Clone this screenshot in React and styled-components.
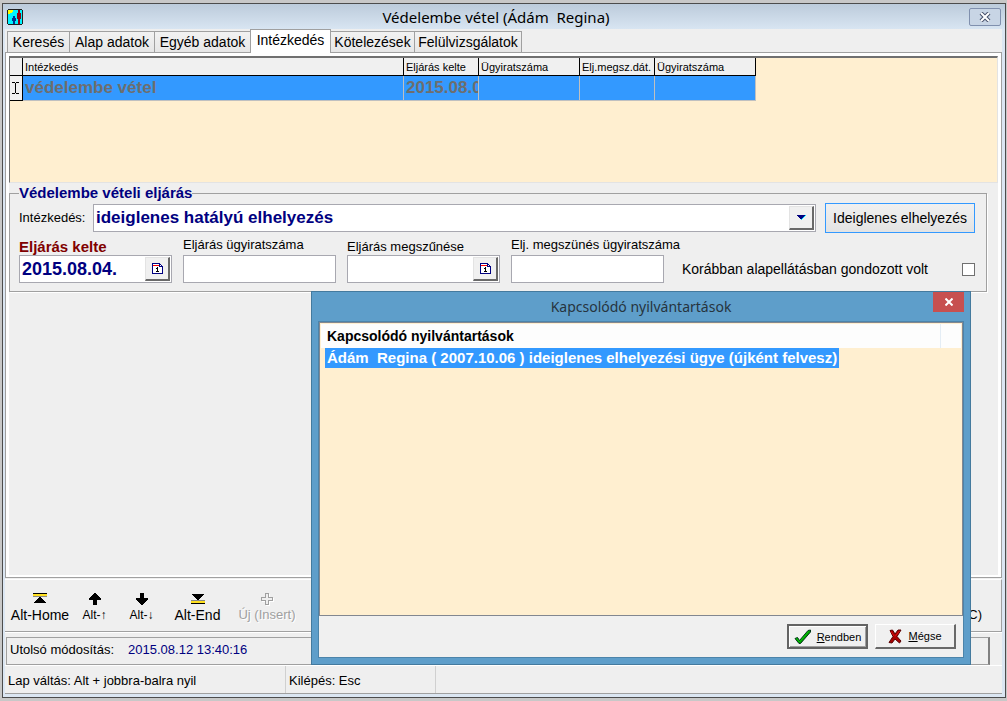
import { useState } from "react";
import styled, { createGlobalStyle, css } from "styled-components";

const tabs = [
  { title: "Keresés", width: 63 },
  { title: "Alap adatok", width: 86 },
  { title: "Egyéb adatok", width: 97 },
  { title: "Intézkedés", width: 81 },
  { title: "Kötelezések", width: 85 },
  { title: "Felülvizsgálatok", width: 108 },
];

const columns = [
  { title: "Intézkedés", width: 381, value: "védelembe vétel" },
  { title: "Eljárás kelte", width: 75, value: "2015.08.04." },
  { title: "Ügyiratszáma", width: 101, value: "" },
  { title: "Elj.megsz.dát.", width: 75, value: "" },
  { title: "Ügyiratszáma", width: 101, value: "" },
];

function FirstIcon() {
  return (
    <svg width="14" height="12" viewBox="0 0 14 12" shapeRendering="crispEdges">
      <path d="M0 0h14v1H0z" fill="#000" />
      <path d="M0 1h14v2H0z" fill="#ffe020" />
      <path d="M0 3h14v1H0z" fill="#888" />
      <path d="M6 4h2v1h1v1h1v1h1v1h1v1h1v1H1V9h1V8h1V7h1V6h1V5h1z" fill="#000" />
    </svg>
  );
}

function LastIcon() {
  return (
    <svg width="14" height="12" viewBox="0 0 14 12" shapeRendering="crispEdges">
      <path d="M1 1h12v1h-1v1h-1v1h-1v1H9v1H8v1H6V6H5V5H4V4H3V3H2V2H1z" fill="#000" />
      <path d="M0 7h14v1H0z" fill="#888" />
      <path d="M0 8h14v2H0z" fill="#ffe020" />
      <path d="M0 10h14v1H0z" fill="#000" />
    </svg>
  );
}

function UpIcon() {
  return (
    <svg width="14" height="12" viewBox="0 0 14 12" shapeRendering="crispEdges">
      <path d="M6 0h2v1h1v1h1v1h1v1h1v1h1v2H9v5H5V7H1V5h1V4h1V3h1V2h1V1h1z" fill="#000" />
    </svg>
  );
}

function DownIcon() {
  return (
    <svg width="14" height="12" viewBox="0 0 14 12" shapeRendering="crispEdges">
      <path d="M5 0h4v5h4v2h-1v1h-1v1h-1v1H9v1H8v1H6v-1H5v-1H4V9H3V8H2V7H1V5h4z" fill="#000" />
    </svg>
  );
}

function PlusIcon() {
  return (
    <svg width="14" height="13" viewBox="0 0 14 13" shapeRendering="crispEdges">
      <path d="M5.5.5h3v4h4v3h-4v4h-3v-4h-4v-3h4z" transform="translate(1 1)" fill="none" stroke="#fff" />
      <path d="M5.5.5h3v4h4v3h-4v4h-3v-4h-4v-3h4z" fill="#efefef" stroke="#a0a0a0" />
    </svg>
  );
}

function CalendarIcon() {
  return (
    <svg width="11" height="11" viewBox="0 0 11 11" shapeRendering="crispEdges">
      <path d="M0 0h8v1h1v1h1v1h1v8H0z" fill="#000080" />
      <path d="M1 1h6v3h3v6H1z" fill="#fff" />
      <path d="M1 2h6v1H1z" fill="#ff0000" />
      <path d="M8 2h1v1H8z" fill="#fff" />
      <path d="M5 4h1v4h1v1H4V8h1V6H4V5h1z" fill="#000" />
    </svg>
  );
}

function AppIcon() {
  return (
    <svg width="16" height="16" viewBox="0 0 16 16" shapeRendering="crispEdges">
      <path d="M1 0h14v1h1v14h-1v1H1v-1H0V1h1z" fill="#202020" />
      <path d="M1 1h14v14H1z" fill="#00f4ff" />
      <path d="M1 1h5v2H5v1H3v1H1z" fill="#ffff00" />
      <path d="M6 7h2v2h1v3H8v3H6v-3H5V9h1z" fill="#003090" />
      <path d="M11 1h2v3h1v6h-1v5h-2v-5h-1V4h1z" fill="#900010" />
    </svg>
  );
}

function CheckIcon() {
  return (
    <svg width="17" height="16" viewBox="0 0 17 16">
      <path d="M1 9.500l2.500-1 2 3L14 1.500l2.500-.5v2L6.500 14.500H5z" fill="#009a00" stroke="#003818" />
      <path d="M2.500 9.500l3 3.500L14.500 2.500" fill="none" stroke="#00d000" />
    </svg>
  );
}

function CrossIcon() {
  return (
    <svg width="14" height="15" viewBox="0 0 14 15">
      <path
        d="M2 1.500l2.500-.5L7 5l3-4h3L9 7.500l4 4.500-1.500 2L7 10l-3 4-3-.5L5 7.500z"
        fill="#a80000"
        stroke="#580000"
      />
      <path d="M3 2.500l3 4.500M11.500 2L7 7.500" fill="none" stroke="#e01010" />
    </svg>
  );
}

function DateField({ label, strong, value }) {
  return (
    <Field>
      <FieldLabel $strong={strong}>
        {label}
        <DateBox>
          <BoxInput defaultValue={value} />
          <BevelButton type="button" aria-label={label}>
            <CalendarIcon />
          </BevelButton>
        </DateBox>
      </FieldLabel>
    </Field>
  );
}

function TextField({ label }) {
  return (
    <Field>
      <FieldLabel $raised>
        {label}
        <DateBox>
          <BoxInput />
        </DateBox>
      </FieldLabel>
    </Field>
  );
}

function RecordGrid() {
  return (
    <GridArea>
      <GridTable>
        <colgroup>
          <col width="13" />
          {columns.map((c, i) => (
            <col key={i} width={c.width} />
          ))}
        </colgroup>
        <thead>
          <tr>
            <HeadCell />
            {columns.map((c, i) => (
              <HeadCell key={i}>{c.title}</HeadCell>
            ))}
          </tr>
        </thead>
        <tbody>
          <tr>
            <MarkerCell>
              <svg width="7" height="12" viewBox="0 0 7 12" shapeRendering="crispEdges">
                <path d="M0 0h3v1h1V0h3v1H4v10h3v1H4v-1H3v1H0v-1h3V1H0z" fill="#000" />
              </svg>
            </MarkerCell>
            {columns.map((c, i) => (
              <DataCell key={i}>{c.value}</DataCell>
            ))}
          </tr>
        </tbody>
      </GridTable>
    </GridArea>
  );
}

function RecordDialog() {
  return (
    <Dialog role="dialog" aria-labelledby="dialog-title">
      <DialogHead>
        <DialogTitle id="dialog-title">Kapcsolódó nyilvántartások</DialogTitle>
        <DialogClose type="button" aria-label="Bezárás">
          <svg width="8" height="8" viewBox="0 0 8 8">
            <path d="M.5.5l7 7M7.500.5l-7 7" stroke="#fff" strokeWidth="2" />
          </svg>
        </DialogClose>
      </DialogHead>
      <DialogBody>
        <List>
          <ListHead>Kapcsolódó nyilvántartások</ListHead>
          <ListRow>Ádám&nbsp; Regina ( 2007.10.06 ) ideiglenes elhelyezési ügye (újként felvesz)</ListRow>
        </List>
        <DialogFooter>
          <DialogButton type="button" $default>
            <CheckIcon />
            <span><u>R</u>endben</span>
          </DialogButton>
          <DialogButton type="button">
            <CrossIcon />
            <span><u>M</u>égse</span>
          </DialogButton>
        </DialogFooter>
      </DialogBody>
    </Dialog>
  );
}

function App() {
  const [active, setActive] = useState("Intézkedés");

  return (
    <Desktop>
      <GlobalStyle />
      <Window>
        <TitleBar>
          <AppIcon />
          <Title>Védelembe vétel (Ádám&nbsp; Regina)</Title>
          <WindowClose type="button" aria-label="Bezárás">
            <svg width="12" height="10" viewBox="0 0 12 10">
              <path d="M2 1l8 8M10 1L2 9" stroke="#46506a" strokeWidth="4" />
              <path d="M2 1l8 8M10 1L2 9" stroke="#fff" strokeWidth="2" />
            </svg>
          </WindowClose>
        </TitleBar>
        <Client>
          <TabBar>
            {tabs.map((t) => (
              <Tab
                key={t.title}
                type="button"
                $width={t.width}
                $active={t.title === active}
                onClick={() => setActive(t.title)}
              >
                {t.title}
              </Tab>
            ))}
          </TabBar>
          <TabPanel>
            <RecordGrid />
            <PanelBody>
              <Group>
                <Legend>Védelembe vételi eljárás</Legend>
                <ActionRow>
                  <MeasureLabel htmlFor="measure">Intézkedés:</MeasureLabel>
                  <SelectBox>
                    <Select id="measure">
                      <option>ideiglenes hatályú elhelyezés</option>
                    </Select>
                    <SelectArrow>
                      <svg width="9" height="5" viewBox="0 0 9 5" shapeRendering="crispEdges">
                        <path d="M0 0h9L5 5H4z" fill="#00e0ff" />
                        <path d="M0 0h8L4 5z" fill="#000080" />
                      </svg>
                    </SelectArrow>
                  </SelectBox>
                  <PlaceButton type="button">Ideiglenes elhelyezés</PlaceButton>
                </ActionRow>
                <FieldRow>
                  <DateField label="Eljárás kelte" strong value="2015.08.04." />
                  <TextField label="Eljárás ügyiratszáma" />
                  <DateField label="Eljárás megszűnése" />
                  <TextField label="Elj. megszünés ügyiratszáma" />
                  <CareLabel>
                    Korábban alapellátásban gondozott volt
                    <CheckBox type="checkbox" />
                  </CareLabel>
                </FieldRow>
              </Group>
            </PanelBody>
          </TabPanel>
          <ToolBar>
            <ToolButton type="button" $width={68}><FirstIcon />Alt-Home</ToolButton>
            <ToolButton type="button" $width={41} $small><UpIcon />Alt-↑</ToolButton>
            <ToolButton type="button" $width={53} $small><DownIcon />Alt-↓</ToolButton>
            <ToolButton type="button" $width={59}><LastIcon />Alt-End</ToolButton>
            <ToolButton type="button" $width={80} disabled><PlusIcon />Új (Insert)</ToolButton>
            <ToolEnd type="button">C)</ToolEnd>
          </ToolBar>
          <InfoBar>
            <InfoBox>
              Utolsó módosítás:
              <Stamp>2015.08.12 13:40:16</Stamp>
            </InfoBox>
          </InfoBar>
          <StatusBar>
            <StatusCell $width={281}>Lap váltás: Alt + jobbra-balra nyil</StatusCell>
            <StatusCell $width={150}>Kilépés: Esc</StatusCell>
          </StatusBar>
        </Client>
      </Window>
      <RecordDialog />
    </Desktop>
  );
}

export default App;

const GlobalStyle = createGlobalStyle`
  * {
    box-sizing: border-box;
  }

  body {
    margin: 0;
    background: #c8c8c8;
    color: #000;
    font: 14px/16px "Liberation Sans", Arial, sans-serif;
  }

  button, input, select {
    margin: 0;
    border-radius: 0;
    font: inherit;
    color: inherit;
  }

  svg {
    display: block;
    flex: none;
  }
`;

const Desktop = styled.div`
  position: relative;
  display: flex;
  min-height: 100vh;
  padding: 3px 1px 3px 2px;
  overflow: hidden;
`;

const Window = styled.div`
  flex: 1;
  min-width: 0;
  display: flex;
  flex-direction: column;
  border: 1px solid #4c4c4c;
  background: #dbe6f2;
`;

const TitleBar = styled.header`
  display: flex;
  align-items: center;
  height: 25px;
  padding: 0 4px;
  background: linear-gradient(#bccbdb, #d8e5f2);
`;

const Title = styled.h1`
  flex: 1;
  margin: 0;
  text-align: center;
  font: 15px/20px "Noto Sans", "Open Sans", sans-serif;
`;

const WindowClose = styled.button`
  display: flex;
  align-items: center;
  justify-content: center;
  width: 32px;
  height: 18px;
  padding: 0;
  border: 1px solid #8090ae;
  border-radius: 2px;
  background: #c8d5e5;
`;

const Client = styled.main`
  flex: 1;
  display: flex;
  flex-direction: column;
  margin: 0 3px 3px 2px;
  background: #efefef;
`;

const TabBar = styled.nav`
  display: flex;
  align-items: flex-end;
  height: 24px;
  padding-left: 2px;
`;

const Tab = styled.button`
  width: ${(p) => p.$width}px;
  height: 22px;
  margin-right: -1px;
  padding: 0;
  border: 1px solid #a0a0a0;
  background: linear-gradient(#f2f2f2, #e6e6e6);
  white-space: nowrap;

  ${(p) => p.$active && css`
    position: relative;
    height: 24px;
    padding-bottom: 4px;
    border-bottom: 0;
    background: #fff;
  `}
`;

const TabPanel = styled.section`
  flex: 1;
  display: flex;
  flex-direction: column;
  margin-top: -1px;
  padding: 3px 3px 2px;
  border: 1px solid #a0a0a0;
  background: #fff;
`;

const GridArea = styled.div`
  height: 127px;
  border: 1px solid #e3e3e3;
  border-top: 2px solid #707070;
  border-left-color: #707070;
  background: #ffefd0;
`;

const GridTable = styled.table`
  table-layout: fixed;
  width: 746px;
  border-collapse: separate;
  border-spacing: 0;
`;

const HeadCell = styled.th`
  height: 18px;
  padding: 0 2px;
  overflow: hidden;
  border-right: 1px solid #000;
  border-bottom: 1px solid #000;
  background: #f0f0f0;
  font-size: 11px;
  font-weight: normal;
  line-height: 16px;
  text-align: left;
  white-space: nowrap;
`;

const MarkerCell = styled.td`
  height: 25px;
  padding: 0 2px;
  border-right: 1px solid #000;
  border-bottom: 1px solid #000;
  background: #f0f0f0;
`;

const DataCell = styled.td`
  height: 25px;
  padding: 0 2px;
  overflow: hidden;
  border-right: 1px solid #c0c0c0;
  border-bottom: 1px solid #c0c0c0;
  background: #3399ff;
  color: #6e6e6e;
  font-size: 17px;
  font-weight: bold;
  line-height: 20px;
  white-space: nowrap;
`;

const PanelBody = styled.div`
  flex: 1;
  padding: 2px 11px 0 0;
  background: #efefef;
`;

const Group = styled.fieldset`
  margin: 0;
  min-width: 0;
  padding: 2px 11px 8px 9px;
  border: 1px solid #a0a0a0;
  box-shadow: 1px 1px 0 #fff;
`;

const Legend = styled.legend`
  padding: 0;
  color: #000080;
  font-size: 15px;
  font-weight: bold;
  line-height: 16px;
`;

const ActionRow = styled.div`
  display: flex;
  align-items: center;
  height: 30px;
`;

const MeasureLabel = styled.label`
  width: 74px;
  font-size: 13px;
`;

const SelectBox = styled.div`
  flex: 1;
  display: grid;
  align-items: center;
  height: 28px;
  margin-right: 9px;
  border: 1px solid #a8a8b0;
  background: #fff;
`;

const Select = styled.select`
  grid-area: 1 / 1;
  width: 100%;
  height: 26px;
  padding: 0 2px;
  border: 0;
  outline: 0;
  appearance: none;
  background: transparent;
  color: #000080;
  font-size: 17px;
  font-weight: bold;
`;

const bevel = css`
  display: flex;
  align-items: center;
  justify-content: center;
  width: 25px;
  height: 24px;
  padding: 0;
  border: 1px solid #e3e3e3;
  border-right: 2px solid #696969;
  border-bottom: 2px solid #696969;
  background: #f0f0f0;
`;

const SelectArrow = styled.span`
  ${bevel}
  grid-area: 1 / 1;
  justify-self: end;
  margin-right: 1px;
  pointer-events: none;
`;

const BevelButton = styled.button`
  ${bevel}
  flex: none;
  margin-right: 1px;
`;

const PlaceButton = styled.button`
  width: 150px;
  height: 30px;
  padding: 0;
  border: 1px solid #3399ff;
  background: linear-gradient(#f0f0f0, #e3e3e3);
  white-space: nowrap;
`;

const FieldRow = styled.div`
  display: flex;
  align-items: flex-end;
  gap: 11px;
  margin-top: 4px;
`;

const Field = styled.div`
  width: 153px;
`;

const FieldLabel = styled.label`
  display: flex;
  flex-direction: column;
  gap: ${(p) => (p.$raised ? 2 : 0)}px;
  font-size: 13px;
  white-space: nowrap;

  ${(p) => p.$strong && css`
    color: #800000;
    font-size: 15px;
    font-weight: bold;
  `}
`;

const DateBox = styled.span`
  display: flex;
  align-items: center;
  height: 28px;
  border: 1px solid #a8a8b0;
  background: #fff;
`;

const BoxInput = styled.input`
  flex: 1;
  min-width: 0;
  height: 26px;
  padding: 0 2px;
  border: 0;
  outline: 0;
  background: transparent;
  color: #000080;
  font-size: 18px;
  font-weight: bold;
`;

const CareLabel = styled.label`
  flex: 1;
  display: flex;
  align-items: center;
  justify-content: space-between;
  height: 28px;
  padding-left: 7px;
  white-space: nowrap;
`;

const CheckBox = styled.input`
  width: 13px;
  height: 13px;
  appearance: none;
  border: 1px solid #707070;
  background: #fff;
`;

const ToolBar = styled.div`
  display: flex;
  height: 53px;
  margin-top: 1px;
  padding: 9px 0 0 1px;
  border-top: 1px solid #fff;
  border-right: 1px solid #a0a0a0;
  border-bottom: 1px solid #a0a0a0;
`;

const ToolButton = styled.button`
  display: flex;
  flex-direction: column;
  align-items: center;
  justify-content: space-between;
  width: ${(p) => p.$width}px;
  height: 34px;
  padding: 4px 0 0;
  border: 0;
  background: transparent;
  font-size: ${(p) => (p.$small ? 12 : 14)}px;
  white-space: nowrap;

  &:disabled {
    color: #a0a0a0;
    font-size: 13px;
    text-shadow: 1px 1px 0 #fff;
  }
`;

const ToolEnd = styled.button`
  align-self: flex-start;
  margin-left: auto;
  margin-right: 19px;
  padding: 18px 0 0;
  border: 0;
  background: transparent;
  font-size: 13px;
`;

const InfoBar = styled.div`
  height: 34px;
  padding: 4px 12px 1px 1px;
  border-top: 1px solid #fff;
  border-bottom: 1px solid #fff;
  font-size: 13px;
`;

const InfoBox = styled.div`
  display: flex;
  align-items: center;
  gap: 14px;
  height: 28px;
  padding: 0 0 3px 3px;
  border: 1px solid #a0a0a0;
  border-right: 2px solid #808080;
`;

const Stamp = styled.span`
  color: #000080;
`;

const StatusBar = styled.footer`
  display: flex;
  height: 28px;
  border-bottom: 1px solid #a0a0a0;
  font-size: 13px;
`;

const StatusCell = styled.div`
  width: ${(p) => p.$width}px;
  height: 27px;
  padding: 0 4px 0 3px;
  border-right: 1px solid #d0d0d0;
  line-height: 30px;
  white-space: nowrap;
`;

const Dialog = styled.section`
  position: absolute;
  top: 291px;
  right: 36px;
  bottom: 36px;
  display: flex;
  flex-direction: column;
  width: 660px;
  padding: 0 6px 6px;
  border: 1px solid #447a9e;
  background: #5e9eca;
`;

const DialogHead = styled.header`
  display: grid;
  height: 29px;
`;

const DialogTitle = styled.h2`
  grid-area: 1 / 1;
  margin: 0;
  text-align: center;
  font: 14px/30px "Noto Sans", "Open Sans", sans-serif;
  color: #26343e;
`;

const DialogClose = styled.button`
  grid-area: 1 / 1;
  justify-self: end;
  display: flex;
  align-items: center;
  justify-content: center;
  width: 31px;
  height: 20px;
  padding: 0;
  border: 0;
  background: #c75050;
`;

const DialogBody = styled.div`
  flex: 1;
  display: flex;
  flex-direction: column;
  border: 1px solid #4c84aa;
  background: #f0f0f0;
`;

const List = styled.div`
  flex: 1;
  padding: 1px;
  border: 1px solid #828790;
  background: #ffefd0;
  font-weight: bold;
`;

const ListHead = styled.div`
  height: 24px;
  padding-left: 6px;
  background: linear-gradient(#e4edf5, #e4edf5) right 20px top / 1px 100% no-repeat #fdfdfd;
  line-height: 24px;
`;

const ListRow = styled.div`
  width: fit-content;
  height: 20px;
  margin-left: 4px;
  padding: 0 2px;
  background: #3399ff;
  color: #fff;
  font-size: 15px;
  line-height: 20px;
  white-space: nowrap;
`;

const DialogFooter = styled.footer`
  display: flex;
  justify-content: flex-end;
  gap: 7px;
  padding: 8px 7px;
`;

const DialogButton = styled.button`
  display: flex;
  align-items: center;
  justify-content: center;
  gap: 6px;
  width: 81px;
  height: 25px;
  padding: 0;
  border: 1px solid #fff;
  border-right: 2px solid #696969;
  border-bottom: 2px solid #696969;
  background: #f0f0f0;
  font-size: 11px;

  ${(p) => p.$default && css`
    border: 2px solid #646464;
    box-shadow: inset 1px 1px 0 #fff, inset -1px -1px 0 #a0a0a0;
  `}
`;
